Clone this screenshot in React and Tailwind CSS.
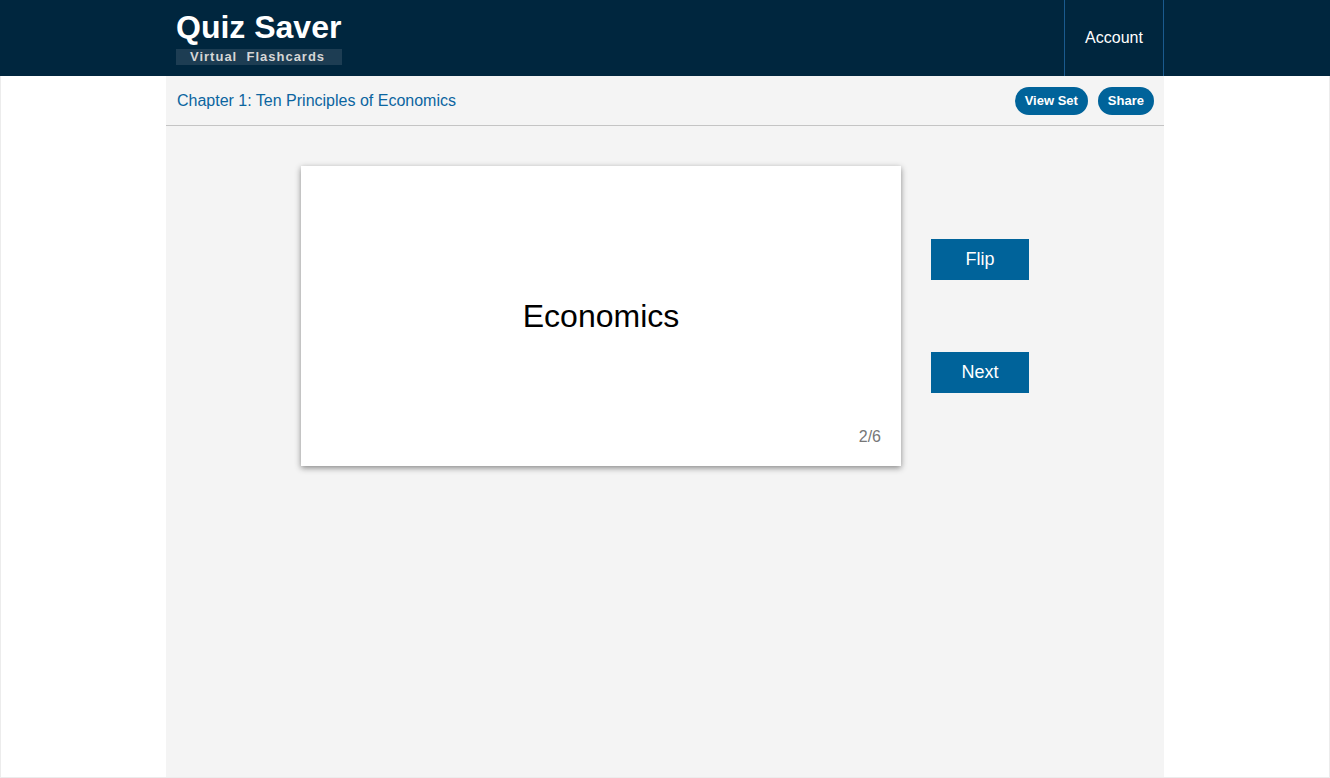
import React, { useState } from "react";

const cards = [
  { front: "Scarcity", back: "The limited nature of society's resources" },
  { front: "Economics", back: "The study of how society manages its scarce resources" },
  { front: "Efficiency", back: "The property of society getting the most it can from its scarce resources" },
  { front: "Equality", back: "The property of distributing economic prosperity uniformly" },
  { front: "Opportunity cost", back: "Whatever must be given up to obtain some item" },
  { front: "Rational people", back: "People who systematically do the best they can" },
];

function App() {
  const [index, setIndex] = useState(1);
  const [flipped, setFlipped] = useState(false);

  const card = cards[index];

  // Pasar a la siguiente tarjeta
  const handleNext = () => {
    setIndex((i) => (i + 1) % cards.length);
    setFlipped(false);
  };

  return (
    <div className="h-[778px] flex flex-col bg-white font-['Liberation_Sans',Arial,sans-serif]">
      {/* Encabezado */}
      <header className="h-[76px] shrink-0 bg-[#00263e]">
        <div className="w-[998px] mx-auto h-full flex justify-between">
          <div className="pl-[10px] pt-[9px]">
            <h1 className="text-[32px] leading-[36px] font-bold text-white">
              Quiz Saver
            </h1>
            <div className="mt-[4px] h-[16px] w-[166px] bg-[#1d3d53] px-[14px] text-[13px] leading-[16px] font-bold tracking-[1px] text-[#d6d6d6] whitespace-pre">
              Virtual  Flashcards
            </div>
          </div>
          <button className="w-[100px] h-full border-x border-[#1a5a8e] text-white text-[16px]">
            Account
          </button>
        </div>
      </header>

      <div className="flex-1 border-x border-b border-[#ececec]">
        <div className="w-[998px] mx-auto h-full bg-[#f4f4f4] flex flex-col">
          {/* Barra del capítulo */}
          <div className="h-[50px] shrink-0 flex items-center justify-between pl-[11px] pr-[10px] border-b border-[#c4c4c4]">
            <span className="text-[16px] text-[#0b65a0]">
              Chapter 1: Ten Principles of Economics
            </span>
            <div className="flex gap-[10px]">
              <button className="h-[28px] px-[10px] rounded-full bg-[#00639a] text-white text-[13px] font-bold">
                View Set
              </button>
              <button className="h-[28px] px-[10px] rounded-full bg-[#00639a] text-white text-[13px] font-bold">
                Share
              </button>
            </div>
          </div>

          {/* Tarjeta */}
          <div className="flex justify-center items-center gap-[30px] pt-[40px]">
            <div className="relative w-[600px] h-[300px] bg-white shadow-[0_2px_6px_rgba(0,0,0,0.45)] flex items-center justify-center px-8">
              <p className="text-[32px] leading-[40px] text-black text-center">
                {flipped ? card.back : card.front}
              </p>
              <span className="absolute right-[20px] bottom-[17px] text-[16px] text-[#777777]">
                {index + 1}/{cards.length}
              </span>
            </div>
            <div className="flex flex-col gap-[72px]">
              <button
                onClick={() => setFlipped(!flipped)}
                className="w-[98px] h-[41px] bg-[#00639a] text-white text-[18px]"
              >
                Flip
              </button>
              <button
                onClick={handleNext}
                className="w-[98px] h-[41px] bg-[#00639a] text-white text-[18px]"
              >
                Next
              </button>
            </div>
          </div>
        </div>
      </div>
    </div>
  );
}

export default App;
